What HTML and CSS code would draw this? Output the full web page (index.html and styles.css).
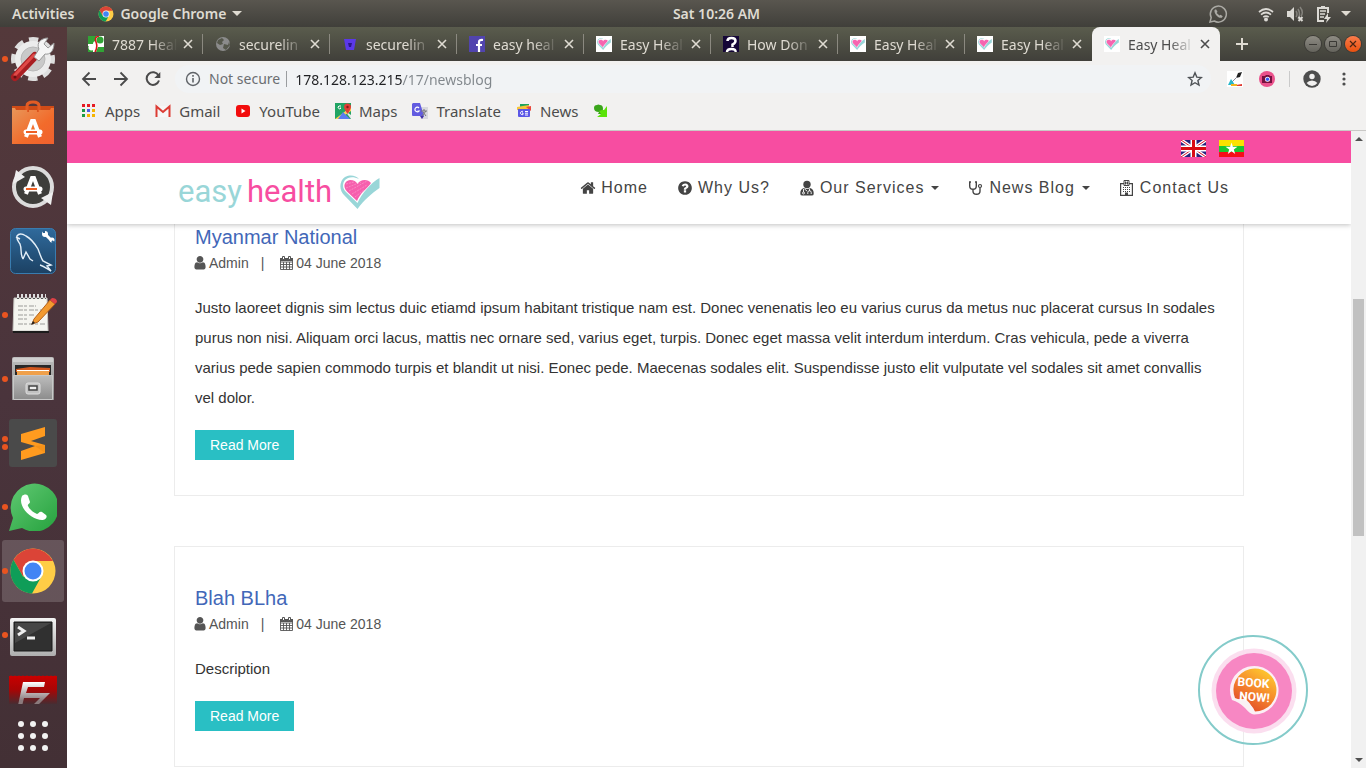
FILE: index.html
```html
<!DOCTYPE html>
<html lang="en">
<head>
<meta charset="utf-8">
<title>Easy Health</title>
<link rel="stylesheet" href="styles.css">
</head>
<body>
<svg class="defs" aria-hidden="true">
  <defs>
    <linearGradient id="orange" x1="0" y1="0" x2="1" y2="1"><stop offset="0" stop-color="#e8975a"/><stop offset=".6" stop-color="#f26b2b"/><stop offset="1" stop-color="#f0602f"/></linearGradient>
    <linearGradient id="silver" x1="0" y1="0" x2="0" y2="1"><stop offset="0" stop-color="#f4f4f4"/><stop offset="1" stop-color="#aeaeae"/></linearGradient>
    <linearGradient id="drawer" x1="0" y1="0" x2="0" y2="1"><stop offset="0" stop-color="#bdbdbd"/><stop offset="1" stop-color="#8c8c8c"/></linearGradient>
    <linearGradient id="steel" x1="0" y1="0" x2="0" y2="1"><stop offset="0" stop-color="#2f6a9c"/><stop offset="1" stop-color="#1c4163"/></linearGradient>
    <linearGradient id="green" x1="0" y1="0" x2="1" y2="1"><stop offset="0" stop-color="#61c973"/><stop offset="1" stop-color="#25a13d"/></linearGradient>
    <linearGradient id="fz" x1="0" y1="0" x2="0" y2="1"><stop offset="0" stop-color="#c80000"/><stop offset=".3" stop-color="#a80505"/><stop offset=".6" stop-color="#4a2b30"/></linearGradient>
    <linearGradient id="fz-letter" x1="0" y1="0" x2="0" y2="1"><stop offset="0" stop-color="#fff"/><stop offset=".6" stop-color="#8a7a7c"/></linearGradient>
    <linearGradient id="sticker" x1=".8" y1="0" x2=".2" y2="1"><stop offset="0" stop-color="#ffce2e"/><stop offset=".5" stop-color="#f5862c"/><stop offset="1" stop-color="#de4128"/></linearGradient>
  </defs>
  <symbol id="heart" viewBox="0 0 40 34">
    <path fill="#99d6d8" d="M19 4C15-1 5-1 1.500 6-1 12 1 17 4 20L17.500 34C24 25 31 19 39.500 13V3C31 8 22 18 17.500 28L6 17C2 13 2.500 8 5 5 8 2 13 1 19 4z"/>
    <path fill="#f65fad" d="M17.500 9C20 4 28 3.500 31 8 27 14 20 18 17 26L7 16.500C2 11 5 5.500 10 5c4 0 6 1.500 7.500 4z"/>
    <path stroke="#fbb3d8" stroke-width=".5" fill="none" stroke-dasharray="2 1" d="M6 9l8-2M6 13l15-6M9 16L27 6M12 19l15-9M15 22l9-7"/>
  </symbol>
  <symbol id="chrome" viewBox="0 0 48 48">
    <circle cx="24" cy="24" r="22.500" fill="#ffcd46"/>
    <path fill="#db4437" d="M4.500 12.700A22.500 22.500 0 0 1 44 14H24L14 29.500z"/>
    <path fill="#0f9d58" d="M4.500 12.700A22.500 22.500 0 0 0 23 46.500L32.700 29 14 29.500z"/>
    <circle cx="24" cy="24" r="10.500" fill="#fff"/><circle cx="24" cy="24" r="8.500" fill="#4285f4"/>
  </symbol>
  <symbol id="close" viewBox="0 0 10 10"><path d="M1 1l8 8M9 1L1 9" stroke="currentColor" stroke-width="1.600"/></symbol>
  <symbol id="user" viewBox="192 128 1408 1600"><path fill="currentColor" d="M1536 1399q0 109-62.500 187t-150.500 78h-854q-88 0-150.500-78t-62.500-187q0-85 8.500-160.500t31.500-152 58.500-131 94-89 134.500-34.500q131 128 313 128t313-128q76 0 134.500 34.500t94 89 58.500 131 31.500 152 8.500 160.500zm-256-887q0 159-112.500 271.500t-271.500 112.500-271.500-112.500-112.500-271.500 112.500-271.500 271.500-112.500 271.500 112.500 112.500 271.500z"/></symbol>
  <symbol id="calendar" viewBox="0 0 14 14"><path fill="none" stroke="currentColor" d="M.5 3.500h12v10H.5zM.5 6h12M.5 8.500h12M.5 11h12M3.500 6v7.500M6.500 6v7.500M9.500 6v7.500" stroke-width=".9"/><path fill="currentColor" d="M0 2h13v3H0z"/><path fill="#fff" stroke="currentColor" d="M2.500.5h2v3h-2zM8.500.5h2v3h-2z"/></symbol>
</svg>

<header class="topbar">
  <div class="topbar-left">
    <button class="plain">Activities</button>
    <button class="plain app-menu"><svg width="16" height="16"><use href="#chrome"/></svg>Google Chrome<i class="caret"></i></button>
  </div>
  <time class="clock">Sat 10:26 AM</time>
  <div class="tray">
    <svg class="tray-chat" width="20" height="20" viewBox="0 0 20 20"><path fill="none" stroke="#aaa9a4" stroke-width="1.500" d="M2 18l1.200-4.300A8 8 0 1 1 6.300 17z"/><path fill="#aaa9a4" d="M6.500 6l1.500-.8 1.500 2.600-.8 1.100 2.700 2.500 1.200-.7 2.200 1.500-1 1.600C10 14.500 6 10 6.500 6z"/></svg>
    <svg width="16" height="16" viewBox="0 0 16 16"><g fill="none" stroke="#dcdad5" stroke-width="1.700"><path d="M1 6q7-6 14 0M3 8.700q5-4.400 10 0M5.300 11.200q2.700-2.300 5.400 0"/></g><circle cx="8" cy="13.500" r="2" fill="#dcdad5"/></svg>
    <svg width="18" height="16" viewBox="0 0 18 16"><path fill="#dcdad5" d="M1 5h3l4-4v14l-4-4H1z"/><path fill="none" stroke="#85837d" stroke-width="1.500" d="M10 5q2 3 0 6M12 3q3 5 0 10M14 1q4 5 1 9"/><path stroke="#dcdad5" stroke-width="2" d="M12.500 11l4 4m0-4l-4 4"/></svg>
    <svg width="16" height="18" viewBox="0 0 16 18"><path fill="none" stroke="#dcdad5" stroke-width="2" d="M12 8V3H2v13h6M5 2h4"/><path stroke="#dcdad5" stroke-width="1.600" d="M4 6h6M4 9h5M4 12h4"/><path fill="#dcdad5" d="M12 8l-4 6h3l-1 4 5-6h-3z"/></svg>
    <i class="caret"></i>
  </div>
</header>

<div class="desktop">
  <nav class="dock" aria-label="Dock">
    <button class="dock-item running" aria-label="Settings"><svg width="48" height="48" viewBox="0 0 48 48"><circle cx="24" cy="24" r="19.500" fill="none" stroke="#dedede" stroke-width="5" stroke-dasharray="9.300 6.015" stroke-dashoffset="4.650"/><circle cx="24" cy="24" r="14" fill="#d9d9d9" stroke="#ececec" stroke-width="8"/><circle cx="24" cy="24" r="12" fill="#c9c9c9" stroke="#b9b9b9"/><path stroke="#a91e22" stroke-width="8" stroke-linecap="round" d="M6 42L26 21"/><path stroke="#e04a48" stroke-width="3" stroke-linecap="round" d="M6 40L25 20"/><path fill="#f5f5f5" stroke="#999" d="M25 22l5 4 6-7c5 1 9-3 9-11l-6 5-4-4 4-6c-7 0-12 5-9 11z"/><circle cx="6" cy="42" r="1.500" fill="#611"/></svg></button>
    <button class="dock-item" aria-label="Software"><svg width="48" height="48" viewBox="0 0 48 48"><path fill="#cf4b17" d="M3 7h42v7H3z"/><path fill="none" stroke="#e35c24" stroke-width="3" d="M18 14V7q0-4 6-4t6 4v7"/><path fill="url(#orange)" d="M3 9l3 0 1 2h11v2h2v-2h8v2h2v-2h11l1-2h3v36H3z"/><path fill="none" stroke="#fff" stroke-width="4" d="M17 38l6-16h2l6 16"/><path stroke="#fff" stroke-width="5" stroke-linecap="round" d="M17 33h14"/><path stroke="#ef6025" stroke-width="2" d="M17 33h11"/></svg></button>
    <button class="dock-item" aria-label="Software Updater"><svg width="48" height="48" viewBox="0 0 48 48"><circle cx="24" cy="24" r="19" fill="#3e3e3b" stroke="#dcdcdc" stroke-width="4"/><path fill="#eee" d="M4 21l3-14 9 7zM44 29l-2 13-10-7z"/><path fill="none" stroke="#fff" stroke-width="4" d="M17 31l6-16h2l6 16"/><path stroke="#fff" stroke-width="5" stroke-linecap="round" d="M17 26h14"/><path stroke="#ef6025" stroke-width="2" d="M17 26h11"/></svg></button>
    <button class="dock-item" aria-label="MySQL Workbench"><svg width="48" height="48" viewBox="0 0 48 48"><rect x="1.500" y="1.500" width="45" height="45" rx="5" fill="url(#steel)" stroke="#397caf"/><path fill="none" stroke="#e4eff8" stroke-width="1.400" d="M14 32c-3-5-1-10-3-15-2-3-4-5-3-8 2-3 6-2 9 0 6 3 9 8 12 13 2 5 3 9 5 12l8 4-4 1 4 5c-4-2-7-5-11-6M14 32l3-7 4 7 3 2M7 10l4 2"/><path stroke="#fff" stroke-width="3" d="M37 8l5 5"/><circle cx="36" cy="7" r="3" fill="#fff"/><circle cx="43" cy="13" r="2.500" fill="#fff"/><path stroke="#2b6190" stroke-width="2" d="M35 3v3M43 14l3 3"/></svg></button>
    <button class="dock-item running" aria-label="Text Editor"><svg width="48" height="48" viewBox="0 0 48 48"><path fill="#f5f5f0" stroke="#c9c9c4" d="M5 7h33l1 33H4z"/><path stroke="#1c1c1c" stroke-width="2" d="M4 41h36"/><path stroke="#555" stroke-width="1.800" stroke-dasharray="2 2" d="M8 7h29"/><path stroke="#ddd" stroke-width="4" stroke-dasharray="2 2" d="M8 5h29"/><path stroke="#9b9b98" stroke-dasharray="5 1 3 2" d="M9 15h18M9 19h24M9 24h16M9 28h11M9 33h27"/><path fill="#f29a30" stroke="#b4611a" d="M25 28L41 9l5 4-17 18-6 2z"/><path fill="#dd4146" d="M41 9l2-2q5 0 5 4l-2 2z"/><path fill="#222" d="M22 34l2-4 2 2z"/></svg></button>
    <button class="dock-item running" aria-label="Files"><svg width="48" height="48" viewBox="0 0 48 48"><path fill="url(#drawer)" d="M3 4q0-2 2-2h38q2 0 2 2v41H3z"/><path fill="#cfcfcf" d="M4 3h40v4H4z"/><path fill="#282828" d="M6 10h36v12H6z"/><path fill="#d2571d" d="M7 14l14-2 20 1v4H7z"/><path fill="#f0a04b" d="M8 16h32v4H8z"/><path stroke="#fff" d="M8 15.500h32"/><path fill="url(#drawer)" stroke="#c8c8c8" d="M4.500 20.500h39v24h-39z"/><rect x="17" y="28" width="14" height="11" rx="2" fill="#c2c2c2" stroke="#dedede"/><path fill="#eee" stroke="#444" stroke-width="1.500" d="M20 31h8v4h-8z"/></svg></button>
    <button class="dock-item running twice" aria-label="Sublime Text"><svg width="48" height="48" viewBox="0 0 48 48"><rect width="48" height="48" rx="3" fill="#4a4a4a"/><path fill="#ff9b1f" d="M12 15l24-7v9l-14 5 14 4v8l-24 7v-9l14-5-14-4z"/><path fill="#e58512" d="M12 32l14-5 10-1v8l-10-7z" opacity=".4"/></svg></button>
    <button class="dock-item running" aria-label="WhatsApp"><svg width="48" height="48" viewBox="0 0 48 48"><path fill="url(#green)" d="M0 48l4-13A24 24 0 1 1 13 45z"/><path fill="#fff" d="M13 13c2-2 5-2 6 0l2 6c0 2-3 2-2 4 2 4 5 6 9 8 2 0 2-3 5-2l4 3c2 2-1 5-4 5C23 37 8 24 13 13z"/></svg></button>
    <button class="dock-item running current" aria-label="Google Chrome"><svg width="48" height="48"><use href="#chrome"/></svg></button>
    <button class="dock-item running" aria-label="Terminal"><svg width="48" height="48" viewBox="0 0 48 48"><rect x="1" y="7" width="46" height="38" rx="2" fill="url(#silver)"/><path fill="#303030" stroke="#181818" d="M5 11h38v29H5z"/><path fill="#464646" d="M6 12h36L6 32z"/><path fill="none" stroke="#eee" stroke-width="3" d="M9 16l6 4-6 4M18 27h8"/></svg></button>
    <div class="dock-cut"><button class="dock-item" aria-label="FileZilla"><svg width="48" height="48" viewBox="0 0 48 48"><path fill="url(#fz)" d="M0 1h48v46H0z"/><path fill="none" stroke="#c80000" stroke-width="3" stroke-linecap="round" stroke-dasharray="0 4" d="M2 2h46"/><path fill="url(#fz-letter)" d="M14 7h22l-1 5H19l-2 6h24l-15 15h10v5H16L31 23H15l-3 12H8z"/></svg></button></div>
    <button class="dock-item" aria-label="Show Applications"><svg width="32" height="32" viewBox="0 0 32 32"><g fill="#f2f2f2"><circle cx="4" cy="4" r="3"/><circle cx="16" cy="4" r="3"/><circle cx="28" cy="4" r="3"/><circle cx="4" cy="16" r="3"/><circle cx="16" cy="16" r="3"/><circle cx="28" cy="16" r="3"/><circle cx="4" cy="28" r="3"/><circle cx="16" cy="28" r="3"/><circle cx="28" cy="28" r="3"/></g></svg></button>
  </nav>

  <div class="browser">
    <div class="tabstrip">
      <div class="tab"><svg class="fav" viewBox="0 0 16 16"><path fill="#fff" d="M0 0h16v16H0z"/><path fill="#31a436" d="M0 0h8v5a3 3 0 0 0-3 3H0zM10 11h6v5H8zM0 10h5v6H0z"/><circle cx="3.500" cy="11.500" r="3" fill="#fff"/><circle cx="12" cy="4" r="3.500" fill="#31a436"/><path fill="none" stroke="#d9141b" stroke-width="1.600" d="M11 0Q6 1 8 6t-1 10"/></svg><a class="tab-title" href="#">7887 Heal</a><button class="tab-close" aria-label="Close tab"><svg><use href="#close"/></svg></button></div>
      <div class="tab"><svg class="fav" viewBox="0 0 16 16"><circle cx="8" cy="8" r="7" fill="#8b8b8b"/><path fill="#55574b" d="M3 4l4-2 2 2-2 2 1 2-3 1-3-2zM9 8l4 1 1-3 1 3-4 5-3-2z"/></svg><a class="tab-title" href="#">securelin</a><button class="tab-close" aria-label="Close tab"><svg><use href="#close"/></svg></button></div>
      <div class="tab"><svg class="fav" viewBox="0 0 16 16"><path fill="#5b38e8" d="M2 3h12l-2 11H4z"/><path fill="#2c168c" d="M6 7h4l-1 4H7z"/></svg><a class="tab-title" href="#">securelin</a><button class="tab-close" aria-label="Close tab"><svg><use href="#close"/></svg></button></div>
      <div class="tab"><svg class="fav" viewBox="0 0 16 16"><path fill="#5144ae" d="M0 0h16v16H0z"/><path fill="none" stroke="#fff" stroke-width="2.200" d="M10 16V6q0-2.500 4-2M7 9h6"/></svg><a class="tab-title" href="#">easy heal</a><button class="tab-close" aria-label="Close tab"><svg><use href="#close"/></svg></button></div>
      <div class="tab"><span class="fav heart-fav"><svg><use href="#heart"/></svg></span><a class="tab-title" href="#">Easy Heal</a><button class="tab-close" aria-label="Close tab"><svg><use href="#close"/></svg></button></div>
      <div class="tab"><svg class="fav" viewBox="0 0 16 16"><path fill="#150637" d="M0 0h16v16H0z"/><path fill="none" stroke="#fff" stroke-width="2.500" d="M4.500 5q0-3 4-3t4 3q0 2-3 3.500V11M4 16q0-3 4.500-3t4 3"/></svg><a class="tab-title" href="#">How Don</a><button class="tab-close" aria-label="Close tab"><svg><use href="#close"/></svg></button></div>
      <div class="tab"><span class="fav heart-fav"><svg><use href="#heart"/></svg></span><a class="tab-title" href="#">Easy Heal</a><button class="tab-close" aria-label="Close tab"><svg><use href="#close"/></svg></button></div>
      <div class="tab before-active"><span class="fav heart-fav"><svg><use href="#heart"/></svg></span><a class="tab-title" href="#">Easy Heal</a><button class="tab-close" aria-label="Close tab"><svg><use href="#close"/></svg></button></div>
      <div class="tab active"><span class="fav heart-fav"><svg><use href="#heart"/></svg></span><a class="tab-title" href="#">Easy Heal</a><button class="tab-close" aria-label="Close tab"><svg><use href="#close"/></svg></button></div>
      <button class="new-tab" aria-label="New tab"><svg width="12" height="12" viewBox="0 0 12 12"><path stroke="#dfdbd2" stroke-width="2" d="M6 0v12M0 6h12"/></svg></button>
      <div class="window-controls">
        <button class="win" aria-label="Minimize"><svg viewBox="0 0 16 16"><path stroke="#3a3935" d="M4 8.500h8"/></svg></button>
        <button class="win" aria-label="Maximize"><svg viewBox="0 0 16 16"><path fill="none" stroke="#3a3935" d="M4.500 5.500h7v5h-7z"/></svg></button>
        <button class="win win-close" aria-label="Close"><svg viewBox="0 0 16 16"><path stroke="#4a2413" stroke-width="1.200" d="M5 5l6 6m0-6l-6 6"/></svg></button>
      </div>
    </div>

    <div class="toolbar">
      <button class="tool" aria-label="Back"><svg width="16" height="16" viewBox="0 0 16 16"><path fill="none" stroke="#4a4a4a" stroke-width="1.800" d="M15 8H2m6.500-6.500L2 8l6.500 6.500"/></svg></button>
      <button class="tool" aria-label="Forward"><svg width="16" height="16" viewBox="0 0 16 16"><path fill="none" stroke="#4a4a4a" stroke-width="1.800" d="M1 8h13M7.500 1.500L14 8l-6.500 6.500"/></svg></button>
      <button class="tool" aria-label="Reload"><svg width="16" height="16" viewBox="0 0 16 16"><path fill="none" stroke="#4a4a4a" stroke-width="2" d="M13.500 4.500A6.300 6.300 0 1 0 14 9.500"/><path fill="#4a4a4a" d="M15.300 1v6H9.300z"/></svg></button>
      <div class="omnibox">
        <svg width="16" height="16" viewBox="0 0 16 16"><circle cx="8" cy="8" r="6.500" fill="none" stroke="#5f6368" stroke-width="1.400"/><path stroke="#5f6368" stroke-width="1.600" d="M8 7v4.500M8 4v1.700"/></svg>
        <label class="not-secure" for="url">Not secure</label>
        <input class="url" id="url" type="text" value="178.128.123.215/17/newsblog">
        <button class="plain" aria-label="Bookmark this page"><svg width="16" height="16" viewBox="0 0 16 16"><path fill="none" stroke="#4f5357" stroke-width="1.400" d="M8 1.800l1.800 4.300 4.600.4-3.500 3 1.100 4.600L8 11.700l-4 2.400 1.100-4.600-3.500-3 4.600-.4z"/></svg></button>
      </div>
      <button class="plain" aria-label="Extension"><svg width="16" height="16" viewBox="0 0 16 16"><path fill="#fff" d="M0 0h16v16H0z"/><path fill="#222" d="M9 7l2-5 4-1-2 5z"/><path stroke="#889" d="M5 11l5-5"/><path fill="#27b7ca" d="M4 8l4 6H1z"/><path fill="#e03a31" d="M9 14l6-1v2H8z"/><path fill="#f2b31d" d="M4 13h6v2H4z"/></svg></button>
      <button class="plain" aria-label="Screenshot extension"><svg width="16" height="16" viewBox="0 0 16 16"><circle cx="8" cy="8" r="8" fill="#e9518b"/><path fill="#75113f" d="M3 5h3l1-1h3l1 1h2v7H3z"/><circle cx="8.500" cy="8.300" r="2.500" fill="#fff"/><circle cx="8.500" cy="8.300" r="1.700" fill="#3657f4"/></svg></button>
      <i class="divider"></i>
      <button class="plain" aria-label="Profile"><svg width="18" height="18" viewBox="0 0 18 18"><circle cx="9" cy="9" r="8.700" fill="#4d4d4d"/><circle cx="9" cy="6.500" r="2.700" fill="#f2f1f0"/><path fill="#f2f1f0" d="M3.600 13q2-2.500 5.400-2.500t5.400 2.500Q12 16 9 16t-5.400-3z"/></svg></button>
      <button class="plain menu-dots" aria-label="Menu"><svg width="4" height="14" viewBox="0 0 4 14"><g fill="#4d4d4d"><circle cx="2" cy="2" r="1.600"/><circle cx="2" cy="7" r="1.600"/><circle cx="2" cy="12" r="1.600"/></g></svg></button>
    </div>

    <nav class="bookmarks" aria-label="Bookmarks">
      <a href="#"><svg viewBox="0 0 16 16"><path fill="#e61b23" d="M1 1h3v3H1zM6 1h3v3H6z"/><path fill="#e61b23" d="M11 1h3v3h-3z"/><path fill="#1b9b44" d="M1 6h3v3H1zM1 11h3v3H1z"/><path fill="#4f5de6" d="M6 6h3v3H6z"/><path fill="#f5b400" d="M11 6h3v3h-3zM6 11h3v3H6zM11 11h3v3h-3z"/></svg>Apps</a>
      <a href="#"><svg viewBox="0 0 16 16"><path fill="#f6f6f6" d="M1 3h14v11H1z"/><path fill="none" stroke="#dc3c34" stroke-width="2" d="M1.500 14V3.500L8 9l6.500-5.500V14"/></svg>Gmail</a>
      <a href="#"><svg viewBox="0 0 16 16"><rect x="1" y="2" width="14" height="12" rx="3" fill="#f20d0d"/><path fill="#fff" d="M6.500 5.500l4 2.500-4 2.500z"/></svg>YouTube</a>
      <a href="#"><svg viewBox="0 0 16 16"><path fill="#21a464" d="M0 0h16v16H0z"/><path fill="#ffd34c" d="M16 4v4L4 16H0z"/><path fill="#5a7cf0" d="M8 9l7 7H3z"/><path fill="#e8e8e8" d="M10 8l6 4v4z"/><path fill="none" stroke="#fff" d="M6 3H4a1.500 1.500 0 1 0 2 2H5"/><path fill="#e03e36" d="M9 4a3.500 3.500 0 0 1 7 0q0 2-3.500 7Q9 6 9 4z"/><circle cx="12.500" cy="4" r="1.200" fill="#831c18"/></svg>Maps</a>
      <a href="#"><svg viewBox="0 0 16 16"><path fill="#d8d8de" d="M6 4h10v12H9z"/><path fill="#625be0" d="M1 0h7l4 13H1q-1 0-1-1V1z"/><path fill="none" stroke="#fff" stroke-width="1.200" d="M7 5a2.300 2.300 0 1 0 0 3H5.500"/><path stroke="#777" d="M9 8h6M12 6v2M10 13l4-5M11 9l3 4"/><path fill="#4130a8" d="M8 13h4l-2 3z"/></svg>Translate</a>
      <a href="#"><svg viewBox="0 0 16 16"><path fill="#1ea55b" d="M4 1h9v5H4z"/><path fill="#f6c43b" d="M1 4l12-2v5H1z"/><path fill="#e9483d" d="M10 4l5-1v5z"/><path fill="#5b57e6" d="M2 6h12v7q0 1-1 1H3q-1 0-1-1z"/><path fill="none" stroke="#fff" d="M7 8.500a1.700 1.700 0 1 0 0 3V10H6M9 8.500h3M9 10.200h3M9 12h3"/></svg>News</a>
      <a href="#" aria-label="Bookmark"><svg viewBox="0 0 16 16"><path fill="#3aa51b" d="M1 5q0-3 3-3 1-1 3 0 3 0 3 4l-1 5H5l1-2Q1 9 1 5z"/><path fill="#5be309" d="M14 3v11H4l4-3-2-3 3-1 2 0z"/></svg></a>
    </nav>

    <div class="viewport">
      <div class="site">
        <header class="site-header">
          <div class="lang-bar"><div class="container flags">
            <a href="#" aria-label="English"><svg width="25" height="17" viewBox="0 0 25 17"><path fill="#26227e" d="M0 0h25v17H0z"/><path stroke="#fff" stroke-width="3.500" d="M0 0l25 17M25 0L0 17"/><path stroke="#d7142a" stroke-width="1" d="M0 0l25 17M25 0L0 17"/><path stroke="#fff" stroke-width="6" d="M12.500 0v17M0 8.500h25"/><path stroke="#d90b14" stroke-width="3" d="M12.500 0v17M0 8.500h25"/></svg></a>
            <a href="#" aria-label="Myanmar"><svg width="25" height="17" viewBox="0 0 25 17"><path fill="#fbe200" d="M0 0h25v6H0z"/><path fill="#1cc52f" d="M0 6h25v6H0z"/><path fill="#f60d17" d="M0 12h25v5H0z"/><path fill="#fff" d="M12.500 2.500l1.400 4.300h4.600l-3.700 2.700 1.400 4.400-3.700-2.700-3.700 2.700 1.400-4.400-3.700-2.700h4.600z"/></svg></a>
          </div></div>
          <div class="container nav-row">
            <a class="logo" href="#"><span class="logo-easy">easy</span><span class="logo-health">health</span><svg width="40" height="34"><use href="#heart"/></svg></a>
            <nav class="menu" aria-label="Main">
              <a href="#"><svg viewBox="0 0 1792 1792"><path fill="currentColor" d="M1472 992v480q0 26-19 45t-45 19h-384v-384h-256v384h-384q-26 0-45-19t-19-45v-480q0-1 .5-3t.5-3l575-474 575 474q1 2 1 6zm223-69l-62 74q-8 9-21 11h-3q-13 0-21-7l-692-577-692 577q-12 8-24 7-13-2-21-11l-62-74q-8-10-7-23.500t11-21.500l719-599q32-26 76-26t76 26l244 204v-195q0-14 9-23t23-9h192q14 0 23 9t9 23v408l219 182q10 8 11 21.500t-7 23.500z"/></svg>Home</a>
              <a href="#"><svg viewBox="0 0 1792 1792"><path fill="currentColor" d="M1024 1376v-192q0-14-9-23t-23-9h-192q-14 0-23 9t-9 23v192q0 14 9 23t23 9h192q14 0 23-9t9-23zm256-672q0-88-55.500-163t-138.500-116-170-41q-243 0-371 213-15 24 8 42l132 100q7 6 19 6 16 0 25-12 53-68 86-92 34-24 86-24 48 0 85.500 26t37.500 59q0 38-20 61t-68 45q-63 28-115.500 86.500t-52.500 125.500v36q0 14 9 23t23 9h192q14 0 23-9t9-23q0-19 21.500-49.500t54.500-49.500q32-18 49-28.500t46-35 44.500-48 28-60.500 12.500-81zm384 192q0 209-103 385.500t-279.500 279.500-385.500 103-385.500-103-279.500-279.500-103-385.500 103-385.500 279.500-279.500 385.500-103 385.500 103 279.500 279.500 103 385.500z"/></svg>Why Us?</a>
              <a href="#"><svg viewBox="0 0 16 16"><circle cx="8" cy="4.500" r="3.700" fill="currentColor"/><path fill="currentColor" d="M5 8q3 2 6 0 4 1 3.700 6 0 1.500-2 1.500H3.300q-2 0-2-1.500Q1 9 5 8z"/><path fill="none" stroke="#fff" stroke-width=".9" d="M4.500 9v3M10.500 8.500V11M8.800 14v-1.700q0-1.500 1.700-1.500t1.700 1.500V14M5.500 9l2.500 2"/><circle cx="4.500" cy="13" r="1" fill="none" stroke="#fff" stroke-width=".9"/></svg>Our Services<i class="caret"></i></a>
              <a href="#"><svg viewBox="0 0 16 16"><path fill="none" stroke="currentColor" stroke-width="1.400" d="M3 2H1.700v4q0 3.300 3.300 3.300T8.300 6V2H7M5 9.300v2q0 3 3.500 3t3.500-3V7.500"/><circle cx="12" cy="6" r="1.500" fill="none" stroke="currentColor" stroke-width="1.200"/></svg>News Blog<i class="caret"></i></a>
              <a href="#"><svg viewBox="0 0 16 16"><path fill="none" stroke="currentColor" stroke-width="1.200" d="M5 3.600H1.600v11.800h11.800V3.600H10"/><path fill="none" stroke="currentColor" d="M5 .5h5v5H5zM6.500 1.500v3M8.500 1.500v3M6.500 3h2"/><path stroke="currentColor" stroke-dasharray="1 1" d="M4 7.500h8M4 9.500h8M4 11.500h8"/><path fill="currentColor" d="M6 12.500h3V16H6z"/></svg>Contact Us</a>
            </nav>
          </div>
        </header>
        <main class="container posts">
          <article class="post post-scrolled">
            <h2><a href="#">Myanmar National</a></h2>
            <p class="meta"><svg><use href="#user"/></svg><span>Admin</span><span class="bar">|</span><svg><use href="#calendar"/></svg><span>04 June 2018</span></p>
            <p class="text">Justo laoreet dignis sim lectus duic etiamd ipsum habitant tristique nam est. Donec venenatis leo eu varius curus da metus nuc placerat cursus In sodales purus non nisi. Aliquam orci lacus, mattis nec ornare sed, varius eget, turpis. Donec eget massa velit interdum interdum. Cras vehicula, pede a viverra varius pede sapien commodo turpis et blandit ut nisi. Eonec pede. Maecenas sodales elit. Suspendisse justo elit vulputate vel sodales sit amet convallis vel dolor.</p>
            <a class="more" href="#">Read More</a>
          </article>
          <article class="post">
            <h2><a href="#">Blah BLha</a></h2>
            <p class="meta"><svg><use href="#user"/></svg><span>Admin</span><span class="bar">|</span><svg><use href="#calendar"/></svg><span>04 June 2018</span></p>
            <p class="text">Description</p>
            <a class="more" href="#">Read More</a>
          </article>
        </main>
        <a class="book" href="#"><svg width="110" height="110" viewBox="0 0 110 110"><circle cx="55" cy="55" r="54" fill="none" stroke="#84cbca" stroke-width="2"/><circle cx="56" cy="56" r="42.500" fill="#fbdcee" fill-opacity=".95"/><circle cx="56" cy="56" r="38" fill="#f782c0" fill-opacity=".95"/><path fill="#fceff5" d="M34 65A24.300 24.300 0 1 1 56 79.500Q52 79 47 73 41 67 34 65z"/><path fill="url(#sticker)" d="M37 63A21.500 21.500 0 1 1 57 76.500Q53 68 48 67z"/><path fill="#f9f1f4" d="M34 64.500l12-.5q6 1 10 14-5-1-9-7-6-5-13-6.500z"/><g class="book-text" transform="rotate(4 56 55)"><text x="55" y="52">BOOK</text><text x="57" y="66">NOW!</text></g></svg></a>
      </div>
      <div class="scrollbar" aria-hidden="true"><i class="arrow up"></i><i class="space-before"></i><i class="thumb"></i><i class="space-after"></i><i class="arrow down"></i></div>
    </div>
  </div>
</div>
</body>
</html>
```
FILE: styles.css
```css
* { box-sizing: border-box; }
body {
  margin: 0;
  height: 100vh;
  display: flex;
  flex-direction: column;
  overflow: hidden;
  font-family: "Noto Sans", "Open Sans", sans-serif;
  font-size: 14px;
}
a { color: inherit; text-decoration: none; }
button { font: inherit; color: inherit; background: none; border: 0; padding: 0; }
svg { display: block; flex: none; }
.defs { position: absolute; width: 0; height: 0; }
.plain { display: flex; align-items: center; }
.caret {
  width: 0;
  height: 0;
  border: 4px solid transparent;
  border-top-color: currentColor;
  border-bottom: 0;
}

/* System bar */
.topbar {
  flex: none;
  height: 27px;
  display: grid;
  grid-template-columns: 1fr auto 1fr;
  align-items: center;
  padding: 0 15px 0 12px;
  background: linear-gradient(#59564f, #403f3a);
  color: #dfdbd2;
  font-weight: 600;
}
.topbar-left { display: flex; gap: 24px; }
.app-menu { gap: 6px; }
.topbar .caret { border-width: 5px 5px 0; }
.clock { padding-left: 70px; }
.tray { display: flex; justify-content: flex-end; align-items: center; gap: 12px; }
.tray .caret { margin-left: -3px; }
.tray-chat { margin-right: 18px; }

.desktop { flex: 1; min-height: 0; display: flex; }

/* Dock */
.dock {
  flex: none;
  width: 67px;
  display: flex;
  flex-direction: column;
  background: linear-gradient(#54393b, #4a343c 50%, #433035);
}
.dock-item {
  position: relative;
  flex: none;
  width: 66px;
  height: 64px;
  display: flex;
  align-items: center;
  justify-content: center;
}
.dock-cut { flex: 1; min-height: 0; overflow: hidden; }
.running::before {
  content: "";
  position: absolute;
  z-index: 1;
  left: 2px;
  top: 29px;
  width: 6px;
  height: 6px;
  border-radius: 3px;
  background: #e95420;
}
.twice::before { top: 25px; box-shadow: 0 8px #e95420; }
.current::after {
  content: "";
  position: absolute;
  inset: 1px 2px;
  border-radius: 3px;
  background: rgba(255, 255, 255, .17);
}
.current svg { position: relative; z-index: 1; }

/* Browser */
.browser { flex: 1; min-width: 0; display: flex; flex-direction: column; background: #f2f1f0; }
.tabstrip {
  flex: none;
  height: 34px;
  display: flex;
  padding: 0 5px 0 9px;
  background: linear-gradient(#5a5c4d, #403f3a);
  color: #dfdbd2;
}
.tab {
  flex: 0 1 127px;
  min-width: 0;
  display: flex;
  align-items: center;
  padding: 0 10px 0 12px;
  gap: 8px;
  background: linear-gradient(#8b8980, #8b8980) right center / 1px 20px no-repeat;
}
.before-active { background: none; }
.tab.active {
  flex-basis: 128px;
  background: #f2f1f0;
  color: #4c4c4c;
  border-radius: 8px 8px 0 0;
}
.fav { flex: none; width: 16px; height: 16px; }
.heart-fav { display: grid; place-items: center; background: #fff; }
.heart-fav svg { width: 14px; height: 12px; }
.tab-title {
  flex: 1;
  min-width: 0;
  margin-right: -4px;
  white-space: nowrap;
  mask-image: linear-gradient(to right, #000 60%, transparent 98%);
}
.tab-close { flex: none; width: 10px; height: 10px; }
.tab-close svg { width: 10px; height: 10px; }
.new-tab { padding: 0 16px; }
.window-controls { display: flex; align-items: center; gap: 4px; margin-left: auto; }
.win {
  width: 16px;
  height: 16px;
  border-radius: 8px;
  background: linear-gradient(#8e8c84, #65645d);
  box-shadow: 0 0 0 1px #3c3b37;
}
.win-close { background: linear-gradient(#f97c4b, #e9500f); }

.toolbar {
  flex: none;
  height: 36px;
  display: flex;
  align-items: center;
  gap: 16px;
  padding: 0 20px 0 14px;
}
.tool + .omnibox { margin-left: -2px; }
.omnibox {
  flex: 1;
  min-width: 0;
  height: 28px;
  display: flex;
  align-items: center;
  gap: 8px;
  padding: 0 8px 0 10px;
  border-radius: 14px;
  background: #f1f3f5;
}
.not-secure { padding-right: 6px; border-right: 1px solid #9a9da0; color: #6b6e72; line-height: 16px; }
.url {
  flex: 1;
  min-width: 0;
  padding: 0;
  border: 0;
  font: inherit;
  color: transparent;
  background: linear-gradient(to right, #202124 107px, #80868b 107px);
  background-clip: text;
}
.divider { width: 1px; height: 16px; background: #cacaca; margin: 0 -3px 0 -2px; }
.menu-dots { margin-left: 5px; }

.bookmarks {
  flex: none;
  height: 34px;
  display: flex;
  align-items: center;
  gap: 15px;
  padding: 0 14px 5px;
  font-size: 15px;
  line-height: 20px;
  color: #4c4c4c;
  border-bottom: 1px solid #c9c8c6;
}
.bookmarks a { display: flex; align-items: center; gap: 8px; }
.bookmarks svg { width: 16px; height: 16px; }

.viewport { flex: 1; min-height: 0; display: flex; }

/* Site */
.site {
  position: relative;
  flex: 1;
  min-width: 0;
  overflow: hidden;
  background: #fff;
  font-family: "Liberation Sans", Arial, sans-serif;
}
.container { max-width: 1070px; margin: 0 auto; }
.site-header { position: relative; background: #fff; box-shadow: 0 1px 5px rgba(0, 0, 0, .25); }
.lang-bar { background: #f74da1; }
.flags { display: flex; align-items: center; justify-content: flex-end; gap: 13px; height: 32px; padding-top: 2px; }
.nav-row { height: 61px; display: flex; justify-content: space-between; }
.logo {
  display: flex;
  align-items: center;
  padding: 0 0 3px 4px;
  font: 400 31px/34px Roboto, sans-serif;
}
.logo-easy { color: #99d6d8; }
.logo-health { margin: 0 8px 0 5px; color: #f74da1; }
.menu { display: flex; padding: 15px 15px 0 0; gap: 29px; font-size: 16px; letter-spacing: 1px; line-height: 20px; color: #444; }
.menu a { display: flex; align-items: center; height: 20px; gap: 5px; white-space: nowrap; }
.menu svg { width: 16px; height: 16px; }
.menu .caret { margin-left: 2px; }

.posts { display: grid; gap: 50px; }
.post { padding: 40px 20px 35px; border: 1px solid #ececec; }
.post-scrolled { padding-top: 2px; border-top: 0; }
.post h2 { margin: 0 0 5px; font-size: 20px; font-weight: 400; line-height: 22px; color: #4267b8; }
.meta { display: flex; align-items: center; margin: 0 0 20px; font-size: 14px; line-height: 20px; color: #555; }
.meta svg { width: 14px; height: 14px; margin: 0 2px 0 -2px; }
.meta .bar { margin: 0 18px 0 12px; }
.text { margin: 0 0 17px; font-size: 15px; line-height: 30px; color: #333; }
.more {
  display: block;
  width: fit-content;
  padding: 0 15px;
  background: #29bfc4;
  color: #fff;
  font-size: 14px;
  line-height: 30px;
}
.book { position: absolute; right: 43px; bottom: 23px; }
.book-text {
  font: 700 12px Roboto, sans-serif;
  fill: #fff;
  text-anchor: middle;
}

/* Scrollbar */
.scrollbar { flex: none; width: 15px; display: flex; flex-direction: column; align-items: center; background: #f1f1f1; }
.arrow { width: 0; height: 0; border: 4px solid transparent; }
.up { border-top: 0; border-bottom-color: #505050; margin: 6px 0; }
.down { border-bottom: 0; border-top-color: #505050; margin: 6px 0; }
.space-before { flex: 152; }
.thumb { flex: 237; width: 11px; background: #c1c1c1; }
.space-after { flex: 216; }
```
